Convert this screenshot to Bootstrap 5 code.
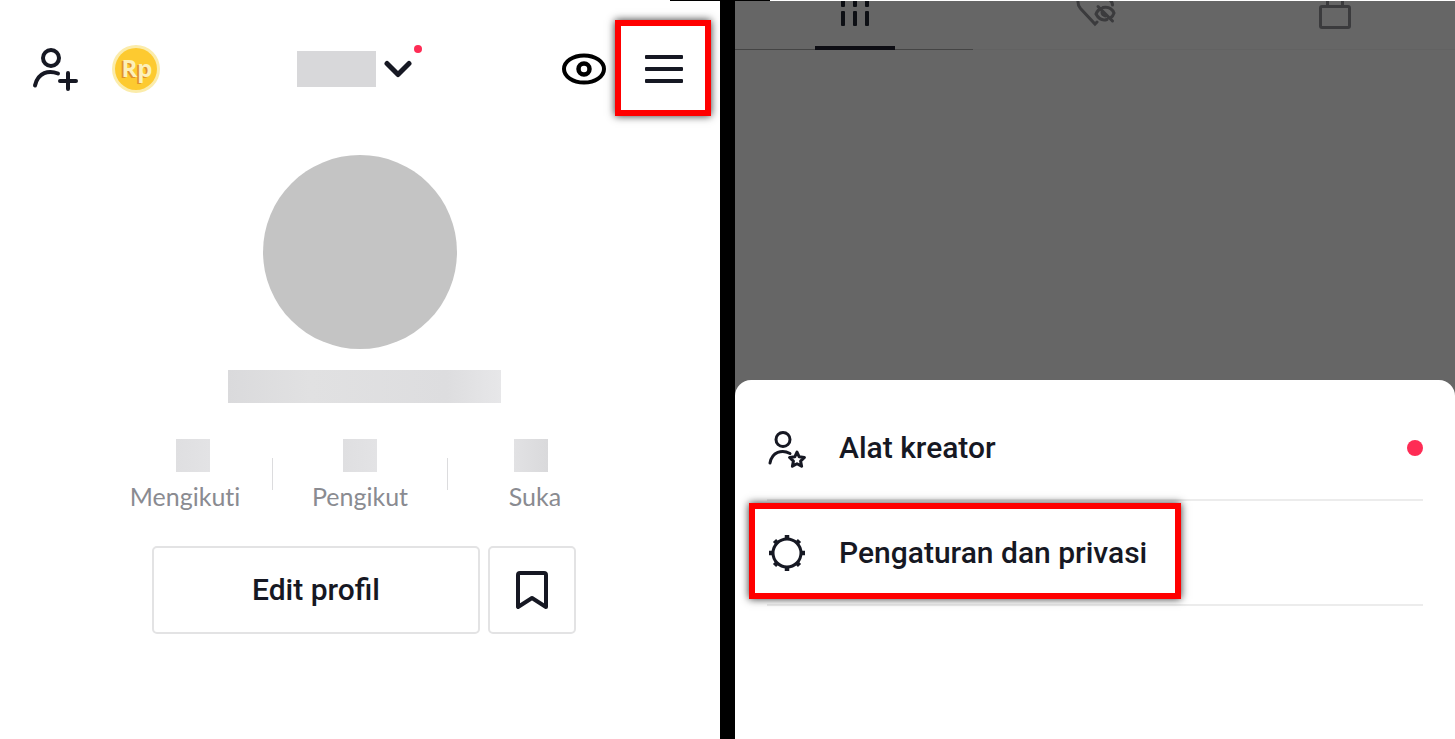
<!DOCTYPE html>
<html lang="id">
<head>
<meta charset="utf-8">
<meta name="viewport" content="width=device-width, initial-scale=1">
<title>Profil</title>
<link href="https://cdn.jsdelivr.net/npm/bootstrap@5.3.0/dist/css/bootstrap.min.css" rel="stylesheet">
<style>
:root { --ink: #161823; --pink: #fe2c55; --line: #e3e3e4; }
body { font-family: Lato, "Open Sans", sans-serif; color: var(--ink); background: #fff; }
svg { display: block; }
.bare { background: none; border: 0; padding: 0; color: inherit; }
.gutter { flex: 0 0 15px; background: #000; }
.edge { height: 1px; top: 0; right: 0; }
.edge-left { width: 50px; background: #000; }
.edge-right { background: linear-gradient(90deg, #000 35px, #fff 35px); }
.callout { border: 6px solid #f00; box-shadow: 0 0 8px rgba(0, 0, 0, .8); }
.topbar { padding-top: 20px; }
.topbar-start { padding-left: 32px; gap: 32px; }
.topbar-end { padding-right: 9px; gap: 8px; }
.menu-btn { width: 96px; height: 96px; }
.mask-user { width: 79px; height: 36px; background: #d8d8da; }
.mask-name { width: 273px; height: 33px; background: linear-gradient(90deg, #dadadc, #e1e1e2 30%, #dddddf 80%, #e7e7e9); }
.mask-count { width: 34px; height: 33px; background: linear-gradient(90deg, #dfdfe1, #e3e3e5); }
.mask-end { background: linear-gradient(90deg, #e2e2e4, #d9d9db); }
.switcher { gap: 8px; width: 126px; height: 42px; padding-top: 2px; }
.dot-sm { width: 8px; height: 8px; top: -2px; right: 1px; background: var(--pink); }
.dot-lg { width: 16px; height: 16px; background: var(--pink); }
.avatar { width: 194px; height: 194px; margin-top: 39px; background: #c4c4c4; }
.name-row { margin-top: 21px; }
.stats { margin-top: 36px; }
.stat { width: 175px; font-size: 25px; line-height: 32px; color: #8a8b91; gap: 8px; font-variant-ligatures: none; }
.stat-rule { position: relative; }
.stat-rule::after { content: ""; position: absolute; right: 0; top: 19px; height: 32px; width: 1px; background: #dcdcde; }
.actions { margin-top: 34px; }
.btn-line { height: 88px; border: 2px solid var(--line); border-radius: 5px; background: #fff; color: var(--ink); }
.btn-line, .sheet-row { font-family: Roboto, Lato, sans-serif; font-size: 30px; line-height: 36px; font-weight: 500; }
.btn-edit { width: 328px; }
.btn-save { width: 88px; }
.dimmed { background: #666; border-top: 1px solid #fff; }
.tabs { height: 49px; background: linear-gradient(#626262, #626262) bottom / 100% 1px no-repeat; }
.tabs-rule { height: 1px; width: 33%; left: 0; bottom: 0; background: #444; }
.tab-on::after { content: ""; position: absolute; left: 50%; bottom: 0; width: 80px; margin-left: -40px; height: 4px; background: #0d0d13; }
.sheet { min-height: 359px; margin-top: -16px; padding: 16px 32px; border-radius: 16px 16px 0 0; background: #fff; }
.sheet-fill { padding-bottom: 16px; }
.sheet-row { height: 105px; border-bottom: 2px solid #ececec; color: var(--ink); gap: 32px; }
.sheet-row:hover { color: var(--ink); }
.callout-row { left: -18px; top: 2px; width: 432px; height: 96px; }
</style>
</head>
<body>
<div class="d-flex min-vh-100">

  <main class="position-relative flex-fill w-50 d-flex flex-column align-items-center">
    <div class="edge edge-left position-absolute"></div>
    <header class="topbar d-flex align-items-center w-100">
      <div class="topbar-start d-flex align-items-center flex-fill w-25">
        <button class="bare" aria-label="Tambah teman">
          <svg width="48" height="48" viewBox="32 44 48 48" fill="none" stroke="#161823" stroke-width="4" stroke-linecap="round">
            <circle cx="51" cy="58" r="8"/><path d="M35 85.500C38 72 49 70 58 73.500"/><path d="M68 73v16M60 81h16"/>
          </svg>
        </button>
        <button class="bare" aria-label="Koin">
          <svg width="48" height="50" viewBox="0 -2 48 50">
            <circle cx="24" cy="24" r="24" fill="#fbecab"/><circle cx="24" cy="24" r="21" fill="#fdca30"/>
            <g font-family="Open Sans, sans-serif" font-weight="700" font-size="24" text-anchor="middle"><text x="23" y="33" fill="#e0922a">Rp</text><text x="25" y="32" fill="#fdf0b8">Rp</text></g>
          </svg>
        </button>
      </div>
      <button class="bare switcher d-flex align-items-center position-relative" aria-label="Ganti akun">
        <span class="mask-user"></span>
        <svg width="28" height="28" viewBox="384 55 28 28" fill="none" stroke="#161823" stroke-width="5" stroke-linecap="round" stroke-linejoin="round"><path d="M387 63.500l11 11 11-11"/></svg>
        <span class="dot-sm rounded-circle position-absolute"></span>
      </button>
      <div class="topbar-end d-flex align-items-center justify-content-end flex-fill w-25">
        <button class="bare" aria-label="Pengunjung profil">
          <svg width="46" height="34" viewBox="0 -1 46 34" fill="none" stroke="#000"><ellipse cx="23" cy="17" rx="20" ry="13.500" stroke-width="4"/><circle cx="23" cy="17" r="5.500" stroke-width="4.500"/></svg>
        </button>
        <button class="bare callout menu-btn d-flex align-items-center justify-content-center" aria-label="Menu">
          <svg width="40" height="30" viewBox="0 -2 40 30" fill="#161823"><rect x="2" width="38" height="4" rx="1"/><rect x="2" y="12" width="38" height="4" rx="1"/><rect x="2" y="24" width="38" height="4" rx="1"/></svg>
        </button>
      </div>
    </header>

    <div class="avatar rounded-circle"></div>
    <div class="name-row ps-2"><div class="mask-name"></div></div>

    <div class="stats d-flex">
      <div class="stat stat-rule d-flex flex-column align-items-center"><span class="mask-count ms-3"></span>Mengikuti</div>
      <div class="stat stat-rule d-flex flex-column align-items-center"><span class="mask-count"></span>Pengikut</div>
      <div class="stat d-flex flex-column align-items-center"><span class="mask-count mask-end me-2"></span>Suka</div>
    </div>

    <div class="actions d-flex gap-2 ps-2">
      <button class="btn btn-line btn-edit">Edit profil</button>
      <button class="btn btn-line btn-save d-flex align-items-center justify-content-center" aria-label="Favorit">
        <svg width="32" height="38" viewBox="0 0 32 38" fill="none" stroke="#161823" stroke-width="4" stroke-linejoin="round"><path d="M2 36V4q0-2 2-2h24q2 0 2 2v32L16 27z"/></svg>
      </button>
    </div>
  </main>

  <div class="gutter"></div>

  <section class="position-relative flex-fill w-50 d-flex flex-column">
    <div class="edge edge-right position-absolute w-100"></div>
    <div class="dimmed flex-grow-1 sheet-fill">
      <nav class="tabs d-flex position-relative" aria-label="Tab profil">
        <div class="tabs-rule position-absolute"></div>
        <button class="bare tab-on position-relative flex-fill w-25 d-flex justify-content-center" aria-label="Video">
          <svg width="28" height="26" viewBox="841 1 28 26" fill="#0d0f14"><path d="M841 0h4v6q0 1-1 1h-2q-1 0-1-1zM853 0h4v6q0 1-1 1h-2q-1 0-1-1zM865 0h4v6q0 1-1 1h-2q-1 0-1-1z"/><rect x="841" y="11" width="4" height="15" rx="1"/><rect x="853" y="11" width="4" height="15" rx="1"/><rect x="865" y="11" width="4" height="15" rx="1"/></svg>
        </button>
        <button class="bare flex-fill w-25 d-flex justify-content-center" aria-label="Disukai">
          <svg width="42" height="28" viewBox="1074 1 42 28" fill="none" stroke="#3b3b3d" stroke-width="3" stroke-linecap="round"><path d="M1078 0q-.5 5 2.500 8.500L1095 24l2-2M1110 0q2.500 2 2.500 5"/><path d="M1103 7.500q8-1.500 11 5.500q-1 3-3 4.500M1107 19.500q-7 2-11-5.500q1.500-4 5-5.500M1098 6.500l14.500 14.500M1102 12q0 3 3.500 4"/></svg>
        </button>
        <button class="bare flex-fill w-25 d-flex justify-content-center" aria-label="Pribadi">
          <svg width="32" height="28" viewBox="1319 1 32 28" fill="none" stroke="#3b3b3d" stroke-width="3"><rect x="1320.500" y="6.500" width="29" height="21" rx="1.500"/><path d="M1327.500 0v6M1342.500 0v6"/></svg>
        </button>
      </nav>
    </div>
    <div class="sheet">
      <a href="#" class="sheet-row d-flex align-items-center text-decoration-none">
        <svg width="40" height="40" viewBox="767 428 40 40" fill="none" stroke="#161823" stroke-width="3" stroke-linecap="round" stroke-linejoin="round"><circle cx="783" cy="439.500" r="7"/><path d="M770 463C772 452 782 449 790 453.500"/><path d="M797 452l2.200 4.800 5.200.7-3.800 3.600 1 5.200-4.600-2.500-4.600 2.500 1-5.200-3.800-3.600 5.200-.7z"/></svg>
        <span class="flex-grow-1">Alat kreator</span>
        <span class="dot-lg rounded-circle"></span>
      </a>
      <a href="#" class="sheet-row d-flex align-items-center text-decoration-none position-relative">
        <svg width="40" height="40" viewBox="-20 -20 40 40" fill="none" stroke="#161823"><circle r="14" stroke-width="3"/><path d="M0-14.500V-18M0 14.500V18M-14.500 0H-18M14.500 0H18M-10.500-10.500l-2-2M10.500-10.500l2-2M-10.500 10.500l-2 2M10.500 10.500l2 2" stroke-width="4.500"/></svg>
        <span>Pengaturan dan privasi</span>
        <span class="callout callout-row position-absolute"></span>
      </a>
    </div>
  </section>

</div>
<script src="https://cdn.jsdelivr.net/npm/bootstrap@5.3.0/dist/js/bootstrap.bundle.min.js"></script>
</body>
</html>
